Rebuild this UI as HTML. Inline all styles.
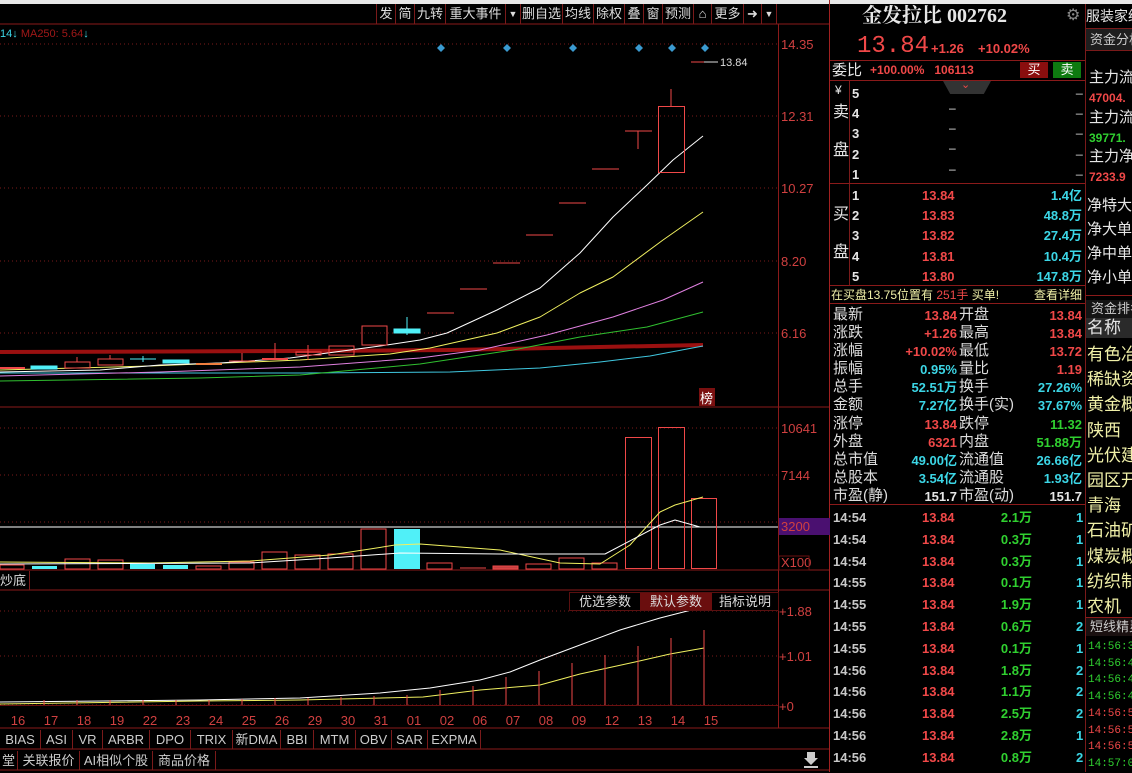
<!DOCTYPE html>
<html><head><meta charset="utf-8"><style>
*{margin:0;padding:0;box-sizing:border-box}
body{width:1132px;height:772px;background:#000;position:relative;overflow:hidden;font-family:"Liberation Sans","Noto Sans CJK SC",sans-serif;font-size:14px;color:#ddd}
.a{position:absolute;white-space:nowrap;line-height:1}
.r{color:#f04848}.c{color:#3cd6e6}.g{color:#30d030}.w{color:#e6e6e6}.y{color:#f0f0a8}.gy{color:#c8c8c8}
.b{font-weight:bold}
.tb{position:absolute;top:4px;height:20px;border-right:1px solid #7a1a1a;color:#ddd;font-size:13px;line-height:20px;text-align:center}
.it{position:absolute;top:730px;height:19px;border-right:1px solid #7a1a1a;font-size:13px;line-height:19px;color:#ccc;text-align:center}
.hl{position:absolute;background:#8a1a1a;height:1px}
polyline{stroke-linejoin:round}
</style></head><body>
<div style="position:absolute;left:0;top:0;width:1132px;height:4px;background:#e8e8e8"></div>

<svg class="a" style="left:0;top:0" width="830" height="772" viewBox="0 0 830 772">
<g stroke="#8a1a1a" fill="none">
<line x1="0" y1="24" x2="830" y2="24"/>
<line x1="778.5" y1="24" x2="778.5" y2="728"/>
<line x1="0" y1="407" x2="830" y2="407"/>
<line x1="0" y1="570" x2="830" y2="570"/>
<line x1="0" y1="590" x2="830" y2="590"/>
<line x1="0" y1="728" x2="830" y2="728"/>
<line x1="0" y1="749" x2="830" y2="749"/>
<line x1="0" y1="770" x2="830" y2="770"/>
<line x1="829.5" y1="0" x2="829.5" y2="772" stroke="#a02020"/>
</g>
<g stroke="#7a1a1a" stroke-dasharray="1,3">
<line x1="0" y1="44" x2="778" y2="44"/><line x1="0" y1="116" x2="778" y2="116"/><line x1="0" y1="188" x2="778" y2="188"/><line x1="0" y1="261" x2="778" y2="261"/><line x1="0" y1="333" x2="778" y2="333"/>
<line x1="0" y1="428" x2="778" y2="428"/><line x1="0" y1="475" x2="778" y2="475"/><line x1="0" y1="522" x2="778" y2="522"/>
<line x1="0" y1="611" x2="778" y2="611"/><line x1="0" y1="656" x2="778" y2="656"/><line x1="0" y1="705" x2="778" y2="705"/>
</g>
<!-- MAs -->
<polyline fill="none" stroke="#9a1010" stroke-width="4" points="0,352 300,351 450,350 600,347 703,345"/>
<polyline fill="none" stroke="#40c8e0" stroke-width="1" points="0,373 300,373 450,372 540,368 600,362 650,356 703,346"/>
<polyline fill="none" stroke="#30c030" stroke-width="1" points="0,381 200,378 300,375 420,364 513,350 580,337 647,327 703,312"/>
<polyline fill="none" stroke="#e080e0" stroke-width="1" points="0,376 160,372 300,367 420,358 480,350 547,335 613,317 663,300 703,282"/>
<polyline fill="none" stroke="#f0f060" stroke-width="1" points="0,370 150,366 300,360 390,354 430,348 497,333 540,317 580,293 613,277 663,240 703,212"/>
<polyline fill="none" stroke="#fff" stroke-width="1" points="0,372 100,370 160,365 220,363 290,358 350,350 380,346 420,340 447,333 497,310 540,288 580,253 613,217 647,185 673,160 703,136"/>
<!-- candles -->
<g stroke="#f04848" fill="none">
<line x1="0" y1="368" x2="25" y2="368" stroke-width="2"/>
<rect x="65" y="362" width="25" height="6"/><line x1="77" y1="357" x2="77" y2="362"/>
<rect x="98" y="359" width="25" height="6"/><line x1="110" y1="355" x2="110" y2="359"/>
<line x1="196" y1="364" x2="222" y2="364" stroke="#f08040" stroke-width="2"/>
<line x1="229" y1="361" x2="255" y2="361"/><line x1="242" y1="353" x2="242" y2="361"/>
<line x1="262" y1="359" x2="288" y2="359" stroke-width="2"/><line x1="275" y1="343" x2="275" y2="360"/>
<rect x="296" y="352" width="25" height="3"/><line x1="308" y1="345" x2="308" y2="360"/>
<rect x="329" y="346" width="25" height="9"/>
<rect x="362" y="326" width="25" height="19"/>
<line x1="427" y1="313" x2="454" y2="313"/>
<line x1="460" y1="289" x2="487" y2="289"/>
<line x1="493" y1="263" x2="520" y2="263"/>
<line x1="526" y1="235" x2="553" y2="235"/>
<line x1="559" y1="203" x2="586" y2="203"/>
<line x1="592" y1="169" x2="619" y2="169"/>
<line x1="625" y1="131" x2="652" y2="131"/><line x1="638" y1="131" x2="638" y2="149"/>
<rect x="658.5" y="106.5" width="26" height="66"/><line x1="671" y1="89" x2="671" y2="106"/>
<line x1="691" y1="62" x2="717" y2="62"/>
</g>
<g fill="#50f0f8" stroke="#50f0f8">
<rect x="31" y="366" width="26" height="3"/>
<line x1="130" y1="359" x2="156" y2="359"/><line x1="143" y1="356" x2="143" y2="362"/>
<rect x="163" y="360" width="26" height="3"/>
<rect x="394" y="329" width="26" height="4"/><line x1="407" y1="317" x2="407" y2="335"/>
</g>
<g fill="#3a9ad0">
<path d="M441 44l4 4-4 4-4-4z"/><path d="M507 44l4 4-4 4-4-4z"/><path d="M573 44l4 4-4 4-4-4z"/><path d="M639 44l4 4-4 4-4-4z"/><path d="M672 44l4 4-4 4-4-4z"/><path d="M705 44l4 4-4 4-4-4z"/>
</g>
<line x1="704" y1="62" x2="718" y2="62" stroke="#ddd"/>
<text x="720" y="66" fill="#ddd" font-size="11" font-family="Liberation Sans">13.84</text>
<rect x="699" y="388" width="16" height="18" fill="#7a1010"/>
<text x="700" y="403" fill="#fff" font-size="13" font-family="Noto Sans CJK SC">榜</text>
<!-- volume -->
<line x1="0" y1="527" x2="778" y2="527" stroke="#fff"/>
<g stroke="#f04848" fill="none">
<rect x="0" y="565" width="24" height="4"/>
<rect x="65" y="559" width="25" height="10"/><rect x="98" y="560" width="25" height="9"/>
<rect x="196" y="566" width="25" height="3"/><rect x="229" y="562" width="25" height="7"/>
<rect x="262" y="552" width="25" height="17"/><rect x="295" y="555" width="25" height="14"/>
<rect x="328" y="554" width="25" height="15"/><rect x="361" y="529" width="25" height="40"/>
<rect x="427" y="563" width="25" height="6"/><line x1="460" y1="568" x2="486" y2="568"/>
<rect x="493" y="566" width="25" height="3" fill="#c04040"/>
<rect x="526" y="564" width="25" height="5"/><rect x="559" y="558" width="25" height="11"/>
<rect x="592" y="563" width="25" height="6"/>
<rect x="625.5" y="437.5" width="26" height="131"/><rect x="658.5" y="427.5" width="26" height="141"/><rect x="691.5" y="498.5" width="25" height="70"/>
</g>
<g fill="#50f0f8"><rect x="32" y="566" width="25" height="3"/><rect x="130" y="564" width="25" height="5"/><rect x="163" y="565" width="25" height="4"/><rect x="394" y="529" width="26" height="40"/></g>
<polyline fill="none" stroke="#f0f060" points="0,562 150,563 250,561 330,555 370,549 395,545 420,544 500,550 560,563 600,564 630,545 660,512 675,505 703,497"/>
<polyline fill="none" stroke="#fff" points="0,564 250,563 330,558 400,553 500,554 605,554 660,525 675,520 700,527"/>
<rect x="779" y="518" width="51" height="17" fill="#4a1070"/>
<!-- bottom indicator -->
<polyline fill="none" stroke="#fff" points="0,702 200,700 300,698 380,693 430,688 480,680 510,672 540,660 580,645 620,630 660,618 703,607"/>
<polyline fill="none" stroke="#f0f060" points="0,704 200,701 300,700 423,697 480,690 540,685 580,674 635,662 670,654 704,648"/>
<g stroke="#f04848">
<line x1="44" y1="705" x2="44" y2="700"/><line x1="77" y1="705" x2="77" y2="700"/><line x1="110" y1="705" x2="110" y2="700"/><line x1="143" y1="705" x2="143" y2="700"/><line x1="176" y1="705" x2="176" y2="700"/><line x1="209" y1="705" x2="209" y2="700"/><line x1="242" y1="705" x2="242" y2="699"/><line x1="275" y1="705" x2="275" y2="698"/><line x1="308" y1="705" x2="308" y2="698"/><line x1="341" y1="705" x2="341" y2="697"/><line x1="374" y1="705" x2="374" y2="696"/><line x1="407" y1="705" x2="407" y2="695"/><line x1="440" y1="705" x2="440" y2="690"/><line x1="473" y1="705" x2="473" y2="686"/><line x1="506" y1="705" x2="506" y2="677"/><line x1="539" y1="705" x2="539" y2="671"/><line x1="572" y1="705" x2="572" y2="663"/><line x1="605" y1="705" x2="605" y2="655"/><line x1="638" y1="705" x2="638" y2="646"/><line x1="671" y1="705" x2="671" y2="638"/><line x1="704" y1="705" x2="704" y2="630"/>
</g>
<line x1="0" y1="705.5" x2="778" y2="705.5" stroke="#6a1010"/>
<g fill="#d04040" font-size="13" font-family="Liberation Sans">
<text x="781" y="49">14.35</text><text x="781" y="121">12.31</text><text x="781" y="193">10.27</text><text x="781" y="266">8.20</text><text x="781" y="338">6.16</text>
<text x="781" y="433">10641</text><text x="781" y="480">7144</text><text x="781" y="531">3200</text><text x="781" y="567">X100</text>
<text x="779" y="616">+1.88</text><text x="779" y="661">+1.01</text><text x="779" y="711">+0</text>
</g>
<rect x="779" y="556" width="30" height="14" fill="none" stroke="#6a1010"/>
<g fill="#d04040" font-size="13" font-family="Liberation Sans" text-anchor="middle">
<text x="18" y="725">16</text><text x="51" y="725">17</text><text x="84" y="725">18</text><text x="117" y="725">19</text><text x="150" y="725">22</text><text x="183" y="725">23</text><text x="216" y="725">24</text><text x="249" y="725">25</text><text x="282" y="725">26</text><text x="315" y="725">29</text><text x="348" y="725">30</text><text x="381" y="725">31</text><text x="414" y="725">01</text><text x="447" y="725">02</text><text x="480" y="725">06</text><text x="513" y="725">07</text><text x="546" y="725">08</text><text x="579" y="725">09</text><text x="612" y="725">12</text><text x="645" y="725">13</text><text x="678" y="725">14</text><text x="711" y="725">15</text>
</g>
<path d="M807 752h8v6h3l-7 7-7-7h3z M804 766h14v2h-14z" fill="#ccc"/>
</svg>

<!-- toolbar -->
<div class="tb" style="left:376px;width:20px;border-left:1px solid #7a1a1a">发</div>
<div class="tb" style="left:396px;width:19px">简</div>
<div class="tb" style="left:415px;width:31px">九转</div>
<div class="tb" style="left:446px;width:60px">重大事件</div>
<div class="tb" style="left:506px;width:15px;font-size:9px">▼</div>
<div class="tb" style="left:521px;width:42px">删自选</div>
<div class="tb" style="left:563px;width:31px">均线</div>
<div class="tb" style="left:594px;width:31px">除权</div>
<div class="tb" style="left:625px;width:19px">叠</div>
<div class="tb" style="left:644px;width:19px">窗</div>
<div class="tb" style="left:663px;width:31px">预测</div>
<div class="tb" style="left:694px;width:18px">⌂</div>
<div class="tb" style="left:712px;width:32px">更多</div>
<div class="tb" style="left:744px;width:18px">➜</div>
<div class="tb" style="left:762px;width:15px;font-size:9px">▼</div>
<div class="a" style="left:0;top:29px;font-size:11px"><span class="c">14↓</span> <span style="color:#a01818">MA250: 5.64</span><span class="c">↓</span></div>
<div class="a" style="left:0;top:574px;font-size:13px;color:#ddd">炒底</div>
<div class="a" style="left:29px;top:571px;width:1px;height:19px;background:#7a1a1a"></div>
<div class="a" style="left:569px;top:592px;width:210px;height:19px;border:1px solid #5a1010;font-size:13px;line-height:17px;color:#ddd"><span style="display:inline-block;width:70px;text-align:center">优选参数</span><span style="display:inline-block;width:72px;text-align:center;background:#6a0e0e">默认参数</span><span style="display:inline-block;width:66px;text-align:center">指标说明</span></div>
<div class="it" style="left:0;width:41px">BIAS</div><div class="it" style="left:41px;width:32px">ASI</div><div class="it" style="left:73px;width:30px">VR</div><div class="it" style="left:103px;width:47px">ARBR</div><div class="it" style="left:150px;width:41px">DPO</div><div class="it" style="left:191px;width:42px">TRIX</div><div class="it" style="left:233px;width:48px">新DMA</div><div class="it" style="left:281px;width:33px">BBI</div><div class="it" style="left:314px;width:42px">MTM</div><div class="it" style="left:356px;width:36px">OBV</div><div class="it" style="left:392px;width:36px">SAR</div><div class="it" style="left:428px;width:53px">EXPMA</div>
<div class="it" style="top:751px;left:0;width:18px">堂</div><div class="it" style="top:751px;left:18px;width:62px">关联报价</div><div class="it" style="top:751px;left:80px;width:73px">AI相似个股</div><div class="it" style="top:751px;left:153px;width:63px">商品价格</div>

<!-- right panel -->
<div class="a" style="left:1085px;top:4px;width:1px;height:768px;background:#7a1a1a"></div>
<div class="a w b" style="left:862px;top:6px;font-size:20px;font-family:'Liberation Serif','Noto Serif CJK SC',serif">金发拉比 002762</div>
<div class="a" style="left:1066px;top:8px;font-size:16px;color:#888">⚙</div>
<div class="a w" style="left:1086px;top:9px;font-size:14px">服装家纺</div>
<div class="a r" style="left:857px;top:35px;font-size:24px;font-family:'Liberation Mono',monospace">13.84</div>
<div class="a r b" style="left:931px;top:42px;font-size:13px">+1.26</div>
<div class="a r b" style="left:978px;top:42px;font-size:13px">+10.02%</div>
<div class="hl" style="left:830px;top:60px;width:255px"></div>
<div class="a w" style="left:832px;top:63px;font-size:15px">委比</div>
<div class="a r b" style="left:870px;top:64px;font-size:12px">+100.00%&nbsp;&nbsp; 106113</div>
<div class="a" style="left:1020px;top:62px;width:28px;height:16px;background:#8a0e0e;color:#fff;font-size:13px;text-align:center;line-height:16px">买</div>
<div class="a" style="left:1053px;top:62px;width:28px;height:16px;background:#0e7a10;color:#fff;font-size:13px;text-align:center;line-height:16px">卖</div>
<div class="hl" style="left:830px;top:80px;width:255px"></div>
<div class="a" style="left:943px;top:81px;width:48px;height:13px;background:#333;clip-path:polygon(0 0,100% 0,85% 100%,15% 100%)"></div>
<div class="a r" style="left:961px;top:80px;font-size:11px">⌄</div>
<div class="a" style="left:849px;top:81px;width:1px;height:204px;background:#7a1a1a"></div>
<div class="a w" style="left:835px;top:84px;font-size:12px">¥</div>
<div class="a w" style="left:833px;top:105px;font-size:16px">卖</div>
<div class="a w" style="left:833px;top:143px;font-size:16px">盘</div>
<div class="a w" style="left:833px;top:207px;font-size:16px">买</div>
<div class="a w" style="left:833px;top:245px;font-size:16px">盘</div>
<div class="hl" style="left:830px;top:183px;width:255px"></div>
<div class="a w b" style="left:852px;top:84px;font-size:13px;line-height:20.2px">5<br>4<br>3<br>2<br>1</div>
<div class="a w" style="left:949px;top:98px;font-size:12px;line-height:20.2px">–<br>–<br>–<br>–</div>
<div class="a w" style="left:1076px;top:78px;font-size:12px;line-height:20.2px">_<br>_<br>_<br>_<br>_</div>
<div class="a w b" style="left:852px;top:186px;font-size:13px;line-height:20.2px">1<br>2<br>3<br>4<br>5</div>
<div class="a r b" style="left:922px;top:186px;font-size:13px;line-height:20.2px">13.84<br>13.83<br>13.82<br>13.81<br>13.80</div>
<div class="a c b" style="left:1000px;top:186px;width:82px;text-align:right;font-size:13px;line-height:20.2px">1.4亿<br>48.8万<br>27.4万<br>10.4万<br>147.8万</div>
<div class="hl" style="left:830px;top:285px;width:255px"></div>
<div class="a y" style="left:831px;top:289px;font-size:12px">在买盘13.75位置有 <span class="r">251手</span> 买单!</div>
<div class="a y" style="left:1034px;top:289px;font-size:12px">查看详细</div>
<div class="hl" style="left:830px;top:303px;width:255px"></div>
<div class="a" style="left:833px;top:306px;font-size:15px;line-height:18.1px;color:#ddd">最新<br>涨跌<br>涨幅<br>振幅<br>总手<br>金额<br>涨停<br>外盘<br>总市值<br>总股本<br>市盈(静)</div>
<div class="a b" style="left:880px;top:307px;width:77px;text-align:right;font-size:13px;line-height:18.1px"><span class="r">13.84</span><br><span class="r">+1.26</span><br><span class="r">+10.02%</span><br><span class="c">0.95%</span><br><span class="c">52.51万</span><br><span class="c">7.27亿</span><br><span class="r">13.84</span><br><span class="r">6321</span><br><span class="c">49.00亿</span><br><span class="c">3.54亿</span><br><span class="w">151.7</span></div>
<div class="a" style="left:959px;top:306px;font-size:15px;line-height:18.1px;color:#ddd">开盘<br>最高<br>最低<br>量比<br>换手<br>换手(实)<br>跌停<br>内盘<br>流通值<br>流通股<br>市盈(动)</div>
<div class="a b" style="left:1004px;top:307px;width:78px;text-align:right;font-size:13px;line-height:18.1px"><span class="r">13.84</span><br><span class="r">13.84</span><br><span class="r">13.72</span><br><span class="r">1.19</span><br><span class="c">27.26%</span><br><span class="c">37.67%</span><br><span class="g">11.32</span><br><span class="g">51.88万</span><br><span class="c">26.66亿</span><br><span class="c">1.93亿</span><br><span class="w">151.7</span></div>
<div class="hl" style="left:830px;top:504px;width:255px"></div>
<div class="a gy b" style="left:833px;top:507px;font-size:13px;line-height:21.8px">14:54<br>14:54<br>14:54<br>14:55<br>14:55<br>14:55<br>14:55<br>14:56<br>14:56<br>14:56<br>14:56<br>14:56</div>
<div class="a r b" style="left:922px;top:507px;font-size:13px;line-height:21.8px">13.84<br>13.84<br>13.84<br>13.84<br>13.84<br>13.84<br>13.84<br>13.84<br>13.84<br>13.84<br>13.84<br>13.84</div>
<div class="a g b" style="left:970px;top:507px;width:62px;text-align:right;font-size:13px;line-height:21.8px">2.1万<br>0.3万<br>0.3万<br>0.1万<br>1.9万<br>0.6万<br>0.1万<br>1.8万<br>1.1万<br>2.5万<br>2.8万<br>0.8万</div>
<div class="a c b" style="left:1076px;top:507px;font-size:13px;line-height:21.8px">1<br>1<br>1<br>1<br>1<br>2<br>1<br>2<br>2<br>2<br>1<br>2</div>
<!-- side -->
<div class="a" style="left:1086px;top:28px;width:46px;height:23px;background:#1e1e1e;border-top:1px solid #7a1a1a;border-bottom:1px solid #7a1a1a"></div>
<div class="a" style="left:1090px;top:33px;font-size:13px;color:#ccc">资金分析</div>
<div class="a w" style="left:1089px;top:58px;font-size:15px;line-height:39.5px">主力流<br>主力流<br>主力净</div>
<div class="a b" style="left:1089px;top:79px;font-size:12px;line-height:39.5px"><span class="r">47004.</span><br><span class="g">39771.</span><br><span class="r">7233.9</span></div>
<div class="a w" style="left:1087px;top:194px;font-size:15px;line-height:24px">净特大<br>净大单<br>净中单<br>净小单</div>
<div class="hl" style="left:1086px;top:295px;width:46px"></div>
<div class="a" style="left:1086px;top:300px;width:46px;height:18px;background:#141414"></div>
<div class="a" style="left:1091px;top:302px;font-size:13px;color:#ccc">资金排名</div>
<div class="a" style="left:1086px;top:318px;width:46px;height:20px;background:#2a2a2a"></div>
<div class="a w" style="left:1087px;top:319px;font-size:17px">名称</div>
<div class="a y" style="left:1087px;top:342px;font-size:17px;line-height:25.2px">有色冶<br>稀缺资<br>黄金概<br>陕西<br>光伏建<br>园区开<br>青海<br>石油矿<br>煤炭概<br>纺织制<br>农机</div>
<div class="hl" style="left:1086px;top:617px;width:46px"></div>
<div class="a" style="left:1086px;top:618px;width:46px;height:18px;background:#1a1010"></div>
<div class="a" style="left:1090px;top:620px;font-size:13px;color:#ccc">短线精灵</div>
<div class="a" style="left:1088px;top:639px;font-size:11px;line-height:16.7px;font-family:'Liberation Mono',monospace"><span class="g">14:56:39</span><br><span class="g">14:56:42</span><br><span class="g">14:56:45</span><br><span class="g">14:56:45</span><br><span class="r">14:56:51</span><br><span class="r">14:56:51</span><br><span class="r">14:56:54</span><br><span class="g">14:57:00</span></div>
</body></html>
